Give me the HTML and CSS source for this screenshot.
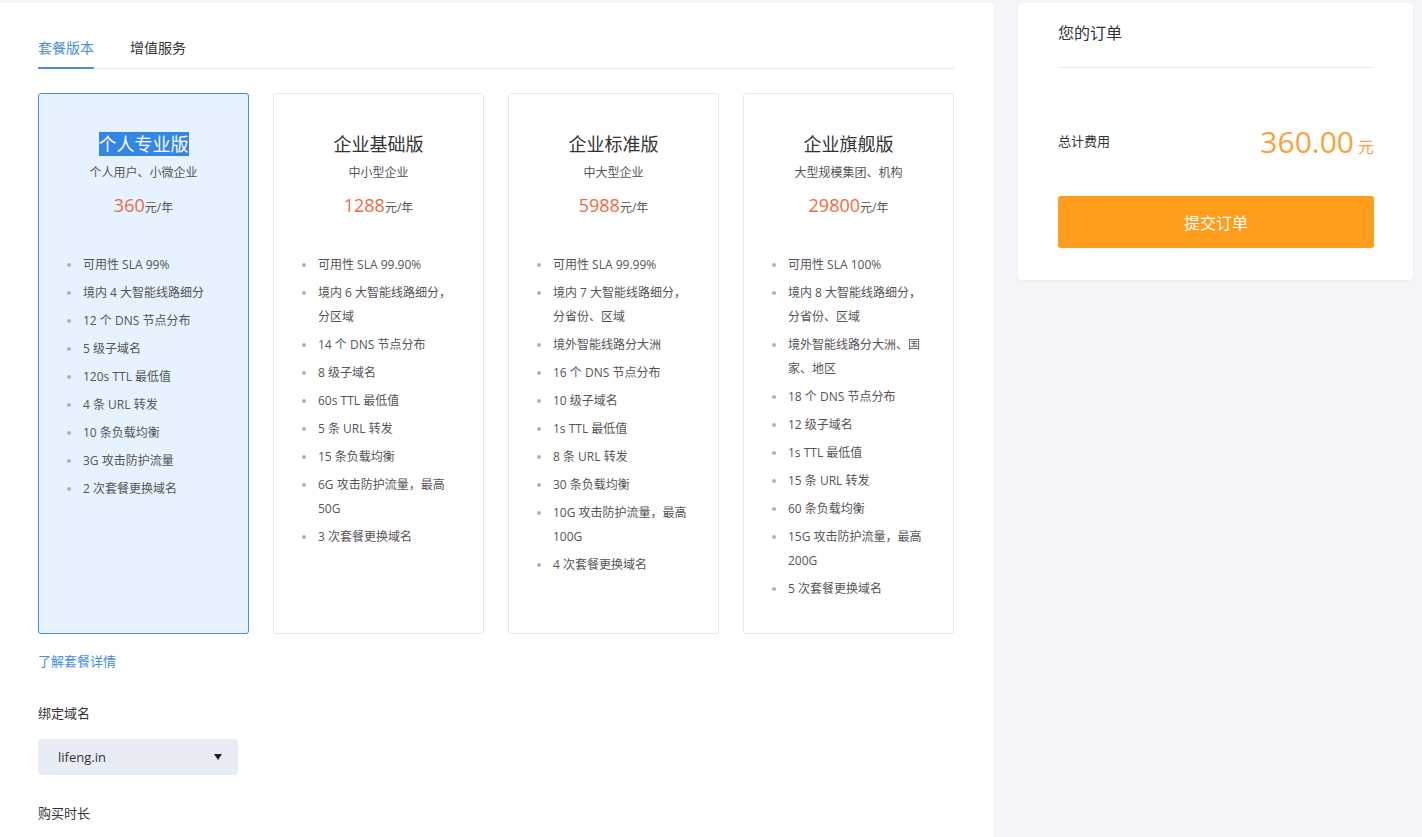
FILE: index.html
```html
<!DOCTYPE html>
<html lang="zh-CN">
<head>
<meta charset="utf-8">
<title>套餐购买</title>
<link rel="stylesheet" href="styles.css">
</head>
<body>
<div class="page">
  <div class="main">
    <div class="tabs">
      <div class="tab active">套餐版本</div>
      <div class="tab">增值服务</div>
    </div>

    <div class="plans">
      <div class="plan selected">
        <div class="plan-title"><span class="sel">个人专业版</span></div>
        <div class="plan-sub">个人用户、小微企业</div>
        <div class="plan-price"><span class="num">360</span>元/年</div>
        <ul class="features">
          <li>可用性 SLA 99%</li>
          <li>境内 4 大智能线路细分</li>
          <li>12 个 DNS 节点分布</li>
          <li>5 级子域名</li>
          <li>120s TTL 最低值</li>
          <li>4 条 URL 转发</li>
          <li>10 条负载均衡</li>
          <li>3G 攻击防护流量</li>
          <li>2 次套餐更换域名</li>
        </ul>
      </div>
      <div class="plan">
        <div class="plan-title">企业基础版</div>
        <div class="plan-sub">中小型企业</div>
        <div class="plan-price"><span class="num">1288</span>元/年</div>
        <ul class="features">
          <li>可用性 SLA 99.90%</li>
          <li>境内 6 大智能线路细分，分区域</li>
          <li>14 个 DNS 节点分布</li>
          <li>8 级子域名</li>
          <li>60s TTL 最低值</li>
          <li>5 条 URL 转发</li>
          <li>15 条负载均衡</li>
          <li>6G 攻击防护流量，最高 50G</li>
          <li>3 次套餐更换域名</li>
        </ul>
      </div>
      <div class="plan">
        <div class="plan-title">企业标准版</div>
        <div class="plan-sub">中大型企业</div>
        <div class="plan-price"><span class="num">5988</span>元/年</div>
        <ul class="features">
          <li>可用性 SLA 99.99%</li>
          <li>境内 7 大智能线路细分，分省份、区域</li>
          <li>境外智能线路分大洲</li>
          <li>16 个 DNS 节点分布</li>
          <li>10 级子域名</li>
          <li>1s TTL 最低值</li>
          <li>8 条 URL 转发</li>
          <li>30 条负载均衡</li>
          <li>10G 攻击防护流量，最高 100G</li>
          <li>4 次套餐更换域名</li>
        </ul>
      </div>
      <div class="plan">
        <div class="plan-title">企业旗舰版</div>
        <div class="plan-sub">大型规模集团、机构</div>
        <div class="plan-price"><span class="num">29800</span>元/年</div>
        <ul class="features">
          <li>可用性 SLA 100%</li>
          <li>境内 8 大智能线路细分，分省份、区域</li>
          <li>境外智能线路分大洲、国家、地区</li>
          <li>18 个 DNS 节点分布</li>
          <li>12 级子域名</li>
          <li>1s TTL 最低值</li>
          <li>15 条 URL 转发</li>
          <li>60 条负载均衡</li>
          <li>15G 攻击防护流量，最高 200G</li>
          <li>5 次套餐更换域名</li>
        </ul>
      </div>
    </div>

    <a class="detail-link" href="#">了解套餐详情</a>

    <div class="field-label">绑定域名</div>
    <div class="select">
      <span>lifeng.in</span>
      <span class="arrow"></span>
    </div>

    <div class="field-label second">购买时长</div>
  </div>

  <div class="side">
    <div class="order">
      <div class="order-head">您的订单</div>
      <div class="order-total">
        <span class="total-label">总计费用</span>
        <span class="total-price"><span class="amount">360.00</span><span class="unit">元</span></span>
      </div>
      <button class="submit">提交订单</button>
    </div>
  </div>
</div>
</body>
</html>
```

FILE: styles.css
```css
* { box-sizing: border-box; }

html, body {
  margin: 0;
  padding: 0;
}

body {
  background: #f3f5f8;
  font-family: "Open Sans", "Noto Sans CJK SC", sans-serif;
  color: #333;
  height: 837px;
  overflow: hidden;
}

.page {
  display: flex;
  align-items: flex-start;
  padding-top: 3px;
}

.main {
  width: 994px;
  min-height: 834px;
  background: #fff;
  padding: 0 40px 0 38px;
}

.tabs {
  display: flex;
  gap: 36px;
  padding-top: 35px;
  border-bottom: 1px solid #e6e8ec;
}

.tab {
  font-size: 14px;
  line-height: 20px;
  padding-bottom: 9px;
  border-bottom: 2px solid transparent;
  margin-bottom: -1px;
  color: #333;
}

.tab.active {
  color: #4a90d9;
  border-bottom-color: #4a90d9;
}

.plans {
  display: grid;
  grid-template-columns: repeat(4, 211px);
  gap: 24px;
  margin-top: 24px;
}

.plan {
  height: 541px;
  border: 1px solid #e6e8eb;
  border-radius: 3px;
  background: #fff;
  padding-top: 36px;
  text-align: center;
}

.plan.selected {
  background: #e6f2fe;
  border-color: #3d8fe0;
}

.plan-title {
  font-size: 18px;
  line-height: 28px;
  color: #333;
}

.sel {
  display: inline-block;
  line-height: 24px;
  background: #3385e6;
  color: #fff;
}

.plan-sub {
  margin-top: 5px;
  font-size: 12px;
  line-height: 20px;
  color: #555;
}

.plan-price {
  margin-top: 8px;
  font-size: 12px;
  line-height: 28px;
  color: #555;
}

.plan-price .num {
  font-size: 18px;
  color: #ef6a43;
}

.features {
  list-style: none;
  margin: 31px 0 0;
  padding: 0 26px 0 44px;
  text-align: left;
}

.features li {
  position: relative;
  font-size: 12px;
  line-height: 24px;
  margin-bottom: 4px;
  color: #555;
}

.features li::before {
  content: "";
  position: absolute;
  left: -16px;
  top: 10px;
  width: 4px;
  height: 4px;
  border-radius: 50%;
  background: #aeb3bb;
}

.detail-link {
  display: block;
  margin-top: 17px;
  font-size: 13px;
  line-height: 20px;
  color: #3c8ee0;
  text-decoration: none;
  width: max-content;
}

.field-label {
  margin-top: 32px;
  font-size: 13px;
  line-height: 20px;
  color: #333;
}

.field-label.second {
  margin-top: 28px;
}

.select {
  margin-top: 16px;
  width: 200px;
  height: 36px;
  border-radius: 4px;
  background: #e7ecf5;
  display: flex;
  align-items: center;
  justify-content: space-between;
  padding: 0 16px 0 20px;
  font-size: 13px;
  color: #333;
}

.arrow {
  width: 0;
  height: 0;
  border-left: 4px solid transparent;
  border-right: 4px solid transparent;
  border-top: 6px solid #222;
}

.side {
  flex: 1;
  padding-left: 24px;
  padding-right: 9px;
}

.order {
  background: #fff;
  border-radius: 4px;
  box-shadow: 0 1px 3px rgba(0, 0, 0, 0.04);
  padding: 0 39px 32px 40px;
}

.order-head {
  padding-top: 17px;
  padding-bottom: 21px;
  font-size: 16px;
  line-height: 26px;
  color: #333;
  border-bottom: 1px solid #e8ebef;
}

.order-total {
  margin-top: 50px;
  height: 46px;
  display: flex;
  align-items: center;
  justify-content: space-between;
}

.total-label {
  font-size: 13px;
  color: #333;
  line-height: 20px;
}

.total-price {
  color: #f7a13d;
  line-height: 40px;
  padding-top: 6px;
}

.amount {
  font-size: 30px;
}

.unit {
  font-size: 16px;
  margin-left: 4px;
}

.submit {
  display: block;
  width: 100%;
  height: 52px;
  margin-top: 32px;
  border: none;
  border-radius: 3px;
  background: #ff9d1c;
  color: #fff;
  font-family: inherit;
  font-size: 16px;
  cursor: pointer;
}
```
